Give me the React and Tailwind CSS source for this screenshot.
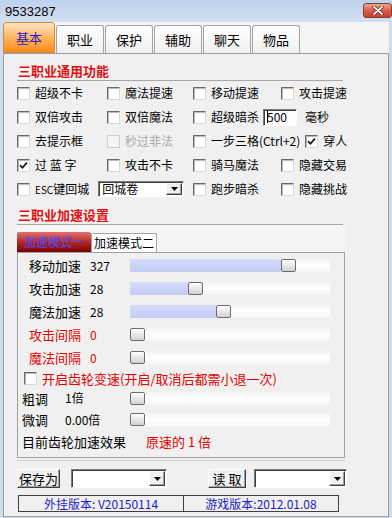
import React from 'react'

// small win32-style helpers
function Check({ checked, disabled }) {
  return (
    <span
      className={`w-[13px] h-[13px] shrink-0 flex items-center justify-center border ${
        disabled
          ? 'border-[#cfcfcf] bg-[#f4f4f4]'
          : 'border-t-[#6a6a6a] border-l-[#6a6a6a] border-r-[#d8d8d8] border-b-[#d8d8d8] bg-white shadow-[inset_1px_1px_0_#b8b8b8]'
      }`}
    >
      {checked && (
        <svg width="9" height="9" viewBox="0 0 9 9">
          <path d="M1 4.2 L3.4 6.8 L8 1.6" stroke="#111" strokeWidth="1.7" fill="none" />
        </svg>
      )}
    </span>
  )
}

function Opt({ label, checked, disabled, red }) {
  return (
    <div className="flex items-center gap-[5px] whitespace-nowrap">
      <Check checked={checked} disabled={disabled} />
      <span className={disabled ? 'text-[#a8a8a8]' : red ? 'text-[#e00000]' : ''}>{label}</span>
    </div>
  )
}

function Arrow() {
  return (
    <span className="w-[16px] h-full shrink-0 flex items-center justify-center bg-[#f0f0f0] border border-t-white border-l-white border-r-[#404040] border-b-[#404040] shadow-[inset_-1px_-1px_0_#a0a0a0]">
      <svg width="7" height="4" viewBox="0 0 7 4">
        <path d="M0 0 H7 L3.5 4 Z" fill="#000" />
      </svg>
    </span>
  )
}

function Combo({ w, text }) {
  return (
    <div
      className="h-full flex items-stretch bg-white border border-t-[#7a7a7a] border-l-[#7a7a7a] border-r-white border-b-white shadow-[inset_1px_1px_0_#404040] pl-[3px] pt-[1px] pr-[1px] pb-[1px]"
      style={{ width: w }}
    >
      <span className="flex-1 flex items-center leading-none">{text}</span>
      <Arrow />
    </div>
  )
}

function Slider({ pos }) {
  return (
    <div className="relative w-[200px] h-[13px] bg-gradient-to-b from-[#f3f3f8] via-white to-[#f6f6fa]">
      <div className="absolute left-0 top-0 h-full bg-gradient-to-b from-[#d6dcfb] to-[#c3cbf6]" style={{ width: pos }} />
      <div
        className="absolute top-0 w-[15px] h-[13px] rounded-[2px] border border-[#6c6c6c] bg-gradient-to-b from-white to-[#d2d2d2]"
        style={{ left: pos }}
      />
    </div>
  )
}

const speedRows = [
  { label: '移动加速', value: '327', pos: 151 },
  { label: '攻击加速', value: '28', pos: 58 },
  { label: '魔法加速', value: '28', pos: 86 },
  { label: '攻击间隔', value: '0', pos: 0, red: true },
  { label: '魔法间隔', value: '0', pos: 0, red: true },
]

function Tab({ label, active }) {
  if (active)
    return (
      <div className="w-[52px] h-[31px] rounded-t-[3px] border border-[#d08a40] bg-gradient-to-b from-[#fde6c6] via-[#ffb45a] to-[#ff8a10] flex items-center justify-center text-[13px] text-[#1c1cd0]">
        {label}
      </div>
    )
  return (
    <div className="w-[48px] h-[28px] rounded-t-[3px] border border-b-0 border-[#a4a4a4] bg-gradient-to-b from-white to-[#f0f0f0] flex items-center justify-center text-[13px]">
      {label}
    </div>
  )
}

export default function App() {
  return (
    <div className="w-[392px] h-[518px] flex flex-col bg-[#cfdcee] overflow-hidden text-[12px] leading-none text-black font-['Noto_Sans_CJK_SC','Noto_Sans',sans-serif]">
      {/* title bar */}
      <div className="h-[22px] shrink-0 flex items-start justify-between pl-[5px] bg-gradient-to-b from-[#bdd2ec] to-[#d3e1f2]">
        <span className="mt-[5px] text-[13px] font-['Liberation_Sans',sans-serif]">9533287</span>
        <div className="mt-[3px] w-[29px] h-[15px] rounded-[3px] border border-[#8a3a30] bg-gradient-to-b from-[#eca592] via-[#d8604a] to-[#c8402a] flex items-center justify-center">
          <svg width="12" height="9" viewBox="0 0 12 9">
            <path d="M2 1 L10 8 M10 1 L2 8" stroke="#5a1a10" strokeWidth="3.2" strokeLinecap="round" />
            <path d="M2 1 L10 8 M10 1 L2 8" stroke="#fff" strokeWidth="1.8" strokeLinecap="round" />
          </svg>
        </div>
      </div>

      {/* body */}
      <div className="flex-1 mx-[3px] mb-[1px] flex flex-col bg-[#f4f4f4]">
        <div className="h-[31px] shrink-0 flex items-end gap-px">
          <Tab label="基本" active />
          <Tab label="职业" />
          <Tab label="保护" />
          <Tab label="辅助" />
          <Tab label="聊天" />
          <Tab label="物品" />
        </div>

        <div className="flex-1 border border-[#9c9c9c] bg-[#f0f0f0] pl-[13px] pt-[6px] flex flex-col">
          {/* 通用功能 */}
          <div className="w-[326px] h-[21px] pl-px flex items-center border-b border-[#a8a8a8] text-[13px] font-bold text-[#e01010]">
            三职业通用功能
          </div>
          <div className="grid grid-cols-[90px_86px_88px_1fr] auto-rows-[24px] items-center">
            <Opt label="超级不卡" />
            <Opt label="魔法提速" />
            <Opt label="移动提速" />
            <Opt label="攻击提速" />

            <Opt label="双倍攻击" />
            <Opt label="双倍魔法" />
            <div className="col-span-2 flex items-center">
              <Opt label="超级暗杀" />
              <div className="ml-[4px] w-[34px] h-[17px] bg-white border border-t-[#7a7a7a] border-l-[#7a7a7a] border-r-white border-b-white shadow-[inset_1px_1px_0_#404040] flex items-center pl-[3px]">
                <span className="w-px h-[12px] bg-black mr-[-1px]" />
                <span>500</span>
              </div>
              <span className="ml-[8px]">毫秒</span>
            </div>

            <Opt label="去提示框" />
            <Opt label="秒过非法" disabled />
            <div className="col-span-2 flex items-center">
              <Opt label="一步三格(Ctrl+2)" />
              <div className="ml-[5px]">
                <Opt label="穿人" checked />
              </div>
            </div>

            <Opt label="过 蓝 字" checked />
            <Opt label="攻击不卡" />
            <Opt label="骑马魔法" />
            <Opt label="隐藏交易" />

            <div className="col-span-2 flex items-center h-[16px]">
              <Opt label={<span><span className="text-[10px]">ESC</span>键回城</span>} />
              <div className="ml-[9px] h-[16px]">
                <Combo w={86} text="回城卷" />
              </div>
            </div>
            <Opt label="跑步暗杀" />
            <Opt label="隐藏挑战" />
          </div>

          {/* 加速设置 */}
          <div className="mt-[4px] w-[326px] h-[20px] pl-px flex items-center border-b border-[#a8a8a8] text-[13px] font-bold text-[#e01010]">
            三职业加速设置
          </div>
          <div className="w-[328px] h-[27px] flex items-end bg-[#f5f4f6]">
            <div className="w-[74px] h-[20px] shrink-0 whitespace-nowrap rounded-t-[2px] bg-gradient-to-b from-[#e07070] via-[#b02828] to-[#780000] flex items-center justify-center text-[12px] text-[#4a4aff]">
              加速模式一
            </div>
            <div className="w-[66px] h-[19px] shrink-0 whitespace-nowrap rounded-t-[2px] border border-b-0 border-[#a4a4a4] bg-white flex items-center justify-center text-[12px]">
              加速模式二
            </div>
          </div>
          <div className="w-[328px] h-[206px] border border-[#a0a0a0] bg-[#f0f0f0] pt-px flex flex-col">
            {speedRows.map((r) => (
              <div key={r.label} className="h-[23px] flex items-center pl-[11px]">
                <span className={`w-[61px] text-[13px] ${r.red ? 'text-[#e00000]' : ''}`}>{r.label}</span>
                <span className={`w-[40px] ${r.red ? 'text-[#e00000]' : ''}`}>{r.value}</span>
                <Slider pos={r.pos} />
              </div>
            ))}
            <div className="h-[18px] flex items-center pl-[6px] text-[13px]">
              <Opt label="开启齿轮变速(开启/取消后都需小退一次)" red />
            </div>
            <div className="h-[22px] flex items-center pl-[4px]">
              <span className="w-[43px] text-[13px]">粗调</span>
              <span className="w-[65px]">1倍</span>
              <Slider pos={0} />
            </div>
            <div className="h-[21px] flex items-center pl-[4px]">
              <span className="w-[43px] text-[13px]">微调</span>
              <span className="w-[65px]">0.00倍</span>
              <Slider pos={0} />
            </div>
            <div className="h-[22px] flex items-center pl-[4px] text-[13px]">
              <span className="w-[124px]">目前齿轮加速效果</span>
              <span className="text-[#e00000]">原速的 1 倍</span>
            </div>
          </div>
          <div className="mt-[2px] w-[328px] h-px bg-[#d4d4d4]" />

          {/* save / load */}
          <div className="mt-[8px] h-[19px] flex items-stretch">
            <div className="w-[43px] flex items-center justify-center text-[13px] bg-[#f0f0f0] border border-t-white border-l-white border-r-[#404040] border-b-[#404040] shadow-[inset_-1px_-1px_0_#a0a0a0]">
              保存为
            </div>
            <div className="ml-[11px]">
              <Combo w={96} text="" />
            </div>
            <div className="ml-[41px] w-[38px] flex items-center justify-center text-[13px] bg-[#f0f0f0] border border-t-white border-l-white border-r-[#404040] border-b-[#404040] shadow-[inset_-1px_-1px_0_#a0a0a0]">
              读 取
            </div>
            <div className="ml-[8px]">
              <Combo w={93} text="" />
            </div>
          </div>

          {/* status */}
          <div className="mt-[7px] ml-px h-[17px] flex text-[#1a1ac8]">
            <div className="w-[166px] border border-[#404040] flex items-center justify-center">外挂版本: V20150114</div>
            <div className="w-[155px] border border-l-0 border-[#404040] flex items-center justify-center">游戏版本:2012.01.08</div>
          </div>
        </div>
      </div>
    </div>
  )
}
